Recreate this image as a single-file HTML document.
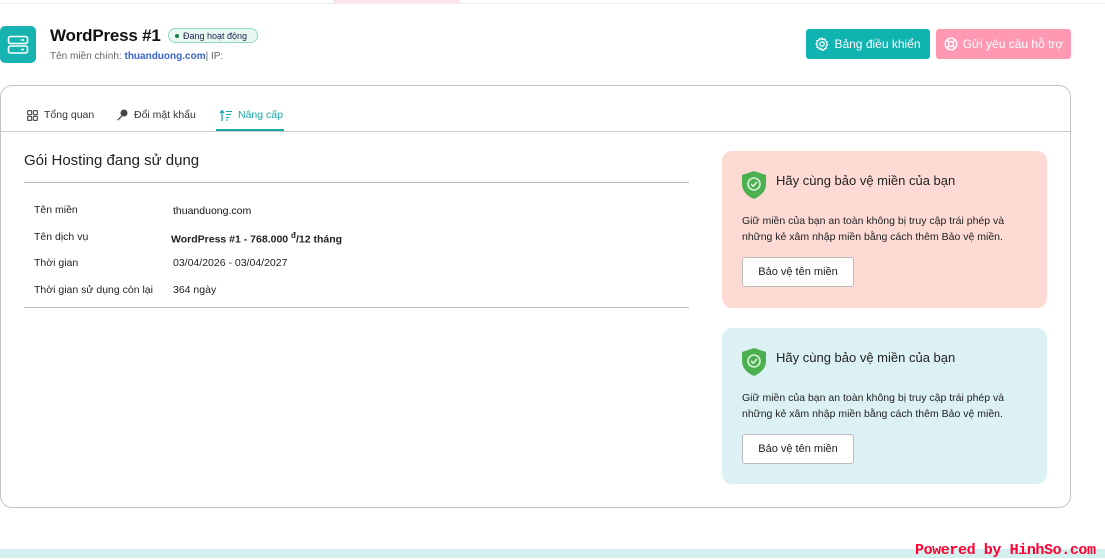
<!DOCTYPE html>
<html><head><meta charset="utf-8"><style>
*{box-sizing:border-box;margin:0;padding:0}
body{width:1105px;height:558px;overflow:hidden;background:#fff;font-family:"Liberation Sans","DejaVu Sans",sans-serif;color:#222;position:relative}
.abs{position:absolute}
.btn{position:absolute;height:30px;border-radius:3px;color:#fff;font-size:12px;display:flex;align-items:center;justify-content:center;gap:5px}
.row{position:absolute;left:34px;font-size:10.5px}
.val{position:absolute;font-size:10.5px;font-weight:bold;color:#222}
.pc{position:absolute;left:722px;width:325px;border-radius:10px}
.pc h3{position:absolute;left:54px;top:22px;font-size:13px;font-weight:normal;color:#222}
.pc p{position:absolute;left:20px;top:62px;font-size:10.5px;line-height:16px;color:#222;width:290px}
.pc .b{position:absolute;left:20px;top:106px;width:112px;height:30px;background:#fff;border:1px solid #bbb;border-radius:3px;font-size:11px;display:flex;align-items:center;justify-content:center}
.pc svg{position:absolute;left:19px;top:19px}
</style></head><body>
<div class="abs" style="left:0;top:3px;width:1105px;height:1px;background:#eee"></div>
<div class="abs" style="left:333px;top:0;width:127px;height:3px;background:#fde6ea"></div>

<div class="abs" style="left:0;top:26px;width:36px;height:37px;background:#17b3b1;border-radius:5px"></div>
<svg class="abs" style="left:7px;top:35px" width="22" height="20" viewBox="0 0 22 20"><rect x="1.5" y="1.5" width="19" height="7" rx="2" fill="none" stroke="#fff" stroke-width="1.6"/><rect x="1.5" y="11" width="19" height="7" rx="2" fill="none" stroke="#fff" stroke-width="1.6"/><line x1="14" y1="5" x2="17" y2="5" stroke="#fff" stroke-width="1.5"/><line x1="14" y1="14.5" x2="17" y2="14.5" stroke="#fff" stroke-width="1.5"/></svg>
<div class="abs" style="left:50px;top:26px;font-size:17px;font-weight:bold;color:#111;letter-spacing:-0.2px">WordPress #1</div>
<div class="abs" style="left:168px;top:28px;height:15px;width:90px;border:1px solid #8ed9bf;background:#e8f8f1;border-radius:8px;font-size:9px;color:#225;display:flex;align-items:center;padding-left:6px;gap:4px"><span style="width:4px;height:4px;border-radius:50%;background:#1a7a4c;display:inline-block"></span>Đang hoạt động</div>
<div class="abs" style="left:50px;top:51px;font-size:10px;color:#666">Tên miền chính: <span style="color:#3a64c8;font-weight:bold">thuanduong.com</span>| IP:</div>

<div class="btn" style="left:806px;top:29px;width:124px;background:#0fb3b0"><svg width="14" height="14" viewBox="0 0 14 14"><circle cx="7" cy="7" r="2.2" fill="none" stroke="#fff" stroke-width="1.3"/><path d="M7 1l1 1.6 1.9-.5.4 1.9 1.8.8-.6 1.8 1 1.4-1.4 1.3.3 1.9-1.9.3-.8 1.8-1.7-.8L7 13l-1-1.4-1.8.7-.5-1.9-1.9-.4.5-1.9L1 7l1.3-1.4-.5-1.9 1.9-.3.7-1.8 1.700.7z" fill="none" stroke="#fff" stroke-width="1.2"/></svg>Bảng điều khiển</div>
<div class="btn" style="left:936px;top:29px;width:135px;background:#ff98b3"><svg width="14" height="14" viewBox="0 0 14 14"><circle cx="7" cy="7" r="5.8" fill="none" stroke="#fff" stroke-width="1.4"/><circle cx="7" cy="7" r="2.5" fill="none" stroke="#fff" stroke-width="1.4"/><path d="M3 3l2.2 2.2M11 3L8.8 5.2M3 11l2.2-2.2M11 11L8.8 8.8" stroke="#fff" stroke-width="1.4"/></svg>Gửi yêu cầu hỗ trợ</div>

<div class="abs" style="left:0;top:85px;width:1071px;height:423px;border:1px solid #c4c4c4;border-radius:12px"></div>
<div class="abs" style="left:1px;top:131px;width:1069px;height:1px;background:#ccc"></div>
<svg class="abs" style="left:27px;top:110px" width="11" height="11" viewBox="0 0 11 11"><g fill="none" stroke="#555" stroke-width="1.2"><rect x=".6" y=".6" width="4" height="4" rx=".8"/><rect x="6.4" y=".6" width="4" height="4" rx=".8"/><rect x=".6" y="6.4" width="4" height="4" rx=".8"/><rect x="6.4" y="6.4" width="4" height="4" rx=".8"/></g></svg>
<div class="abs" style="left:44px;top:109px;font-size:10.5px;color:#333">Tổng quan</div>
<svg class="abs" style="left:116px;top:109px" width="12" height="12" viewBox="0 0 12 12"><circle cx="8" cy="4" r="3.5" fill="#444"/><path d="M6 6L1 11l1.5.5L3 10l1 .5.5-1.5 1.5-1" fill="#444"/></svg>
<div class="abs" style="left:134px;top:109px;font-size:10.5px;color:#333">Đổi mật khẩu</div>
<svg class="abs" style="left:219px;top:110px" width="14" height="11" viewBox="0 0 14 11"><path d="M3 11V1M1 3l2-2.3L5 3" stroke="#17a9a6" stroke-width="1.3" fill="none"/><path d="M7 1.5h6M7 4.5h5M7 7.5h3.5M7 10h2" stroke="#17a9a6" stroke-width="1.1"/></svg>
<div class="abs" style="left:238px;top:109px;font-size:10.5px;color:#17a9a6">Nâng cấp</div>
<div class="abs" style="left:216px;top:129px;width:68px;height:2px;background:#17a9a6"></div>

<div class="abs" style="left:24px;top:152px;font-size:15px;color:#222">Gói Hosting đang sử dụng</div>
<div class="abs" style="left:24px;top:182px;width:665px;height:1px;background:#bbb"></div>
<div class="row" style="top:204px">Tên miền</div><div class="val" style="left:173px;top:205px;font-weight:normal;color:#111">thuanduong.com</div>
<div class="row" style="top:231px">Tên dịch vụ</div><div class="val" style="left:171px;top:231px">WordPress #1 - 768.000 <sup style="font-size:8px">đ</sup>/12 tháng</div>
<div class="row" style="top:257px">Thời gian</div><div class="val" style="left:173px;top:257px;font-weight:normal">03/04/2026 - 03/04/2027</div>
<div class="row" style="top:284px">Thời gian sử dụng còn lại</div><div class="val" style="left:173px;top:284px;font-weight:normal">364 ngày</div>
<div class="abs" style="left:24px;top:307px;width:665px;height:1px;background:#bbb"></div>

<div class="pc" style="top:151px;height:157px;background:#fddbd4">
<svg width="26" height="30" viewBox="0 0 26 30"><path d="M13 1L25 5v9c0 7-5 12-12 15C6 26 1 21 1 14V5z" fill="#4caf50"/><circle cx="13" cy="14" r="6" fill="none" stroke="#d9f2d9" stroke-width="1.6"/><path d="M10 14l2.2 2.2L16 12" stroke="#d9f2d9" stroke-width="1.6" fill="none"/></svg>
<h3>Hãy cùng bảo vệ miền của bạn</h3>
<p>Giữ miền của bạn an toàn không bị truy cập trái phép và những kẻ xâm nhập miền bằng cách thêm Bảo vệ miền.</p>
<div class="b">Bảo vệ tên miền</div></div>
<div class="pc" style="top:328px;height:156px;background:#dcf1f4">
<svg width="26" height="30" viewBox="0 0 26 30"><path d="M13 1L25 5v9c0 7-5 12-12 15C6 26 1 21 1 14V5z" fill="#4caf50"/><circle cx="13" cy="14" r="6" fill="none" stroke="#d9f2d9" stroke-width="1.6"/><path d="M10 14l2.2 2.2L16 12" stroke="#d9f2d9" stroke-width="1.6" fill="none"/></svg>
<h3>Hãy cùng bảo vệ miền của bạn</h3>
<p>Giữ miền của bạn an toàn không bị truy cập trái phép và những kẻ xâm nhập miền bằng cách thêm Bảo vệ miền.</p>
<div class="b">Bảo vệ tên miền</div></div>

<div class="abs" style="left:0;top:549px;width:1105px;height:9px;background:#d3f0ef"></div>
<div class="abs" style="left:915px;top:543px;width:190px;font-family:'Liberation Mono',monospace;font-size:15px;font-weight:bold;color:#ff0033;line-height:16px;letter-spacing:-0.4px;white-space:nowrap">Powered by HinhSo.com</div>
</body></html>
